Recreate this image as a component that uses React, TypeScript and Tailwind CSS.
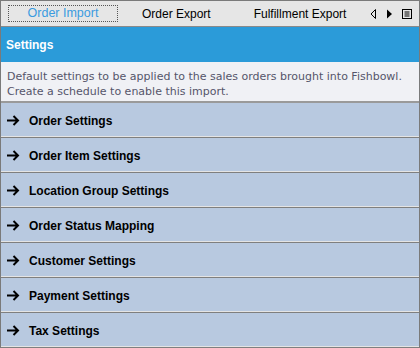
import React from "react";

const rows = [
  "Order Settings",
  "Order Item Settings",
  "Location Group Settings",
  "Order Status Mapping",
  "Customer Settings",
  "Payment Settings",
  "Tax Settings",
];

function Arrow() {
  return (
    <svg width="13" height="11" viewBox="0 0 13 11" className="shrink-0">
      <path d="M0 5.5H11M6.5 1L11 5.5L6.5 10" stroke="#000" strokeWidth="2" fill="none" />
    </svg>
  );
}

export default function App() {
  return (
    <div
      className="w-[420px] h-[348px] flex flex-col border-t border-l border-r border-[#7a7a7a] bg-[#b8c9e0] overflow-hidden"
      style={{ fontFamily: '"Liberation Sans", Arial, sans-serif' }}
    >
      <div className="h-[26px] shrink-0 flex items-center bg-[#e6e6e6] border-b border-[#8a8a8a] text-[12px] text-black">
        <div className="ml-[7px] w-[110px] h-[17px] flex items-center justify-center border border-dotted border-[#555] text-[#3b9be0] text-[12.5px]">
          Order Import
        </div>
        <div className="ml-[24px]">Order Export</div>
        <div className="ml-[43px]">Fulfillment Export</div>
        <div className="ml-auto mr-[7px] flex items-center gap-[9px]">
          <svg width="7" height="10" viewBox="0 0 7 10">
            <path d="M5.5 0.5L1 5L5.5 9.5Z" fill="none" stroke="#000" strokeWidth="1" />
          </svg>
          <svg width="7" height="10" viewBox="0 0 7 10">
            <path d="M1 0.5L6 5L1 9.5Z" fill="#000" />
          </svg>
          <svg width="10" height="10" viewBox="0 0 10 10">
            <rect x="0.5" y="0.5" width="9" height="9" fill="none" stroke="#000" />
            <path d="M2.5 3H7.5M2.5 5H7.5M2.5 7H7.5" stroke="#000" />
          </svg>
        </div>
      </div>
      <div className="h-[35px] shrink-0 flex items-center px-[5px] bg-[#2b9bd9] text-white font-bold text-[12px]">
        Settings
      </div>
      <div
        className="h-[41px] shrink-0 flex flex-col pt-[7px] px-[6px] bg-[#f0f1f5] text-[#55556a] text-[11px] leading-[15px] border-b-2 border-[#9a9a9a]"
        style={{ fontFamily: '"DejaVu Sans", Verdana, sans-serif' }}
      >
        <div>Default settings to be applied to the sales orders brought into Fishbowl.</div>
        <div>Create a schedule to enable this import.</div>
      </div>
      <div className="flex-1 flex flex-col">
        {rows.map((r) => (
          <div
            key={r}
            className="h-[35px] shrink-0 flex flex-col text-[12px] font-bold text-black"
          >
            <div className="flex-1 flex items-center gap-[9px] pl-[6px] pt-[2px]">
              <Arrow />
              <span>{r}</span>
            </div>
            <div className="h-px bg-[#e4e4e4]" />
            <div className="h-px bg-[#7f7f7f]" />
          </div>
        ))}
      </div>
    </div>
  );
}
